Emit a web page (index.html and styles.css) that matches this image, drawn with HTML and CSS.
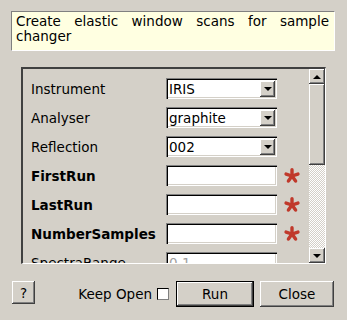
FILE: index.html
```html
<!DOCTYPE html>
<html lang="en">
<head>
    <meta charset="UTF-8">
    <title>Sample Changer Scans</title>
    <link rel="stylesheet" href="styles.css">
</head>
<body>
    <div class="desc">Create elastic window scans for sample changer</div>
    <div class="frame">
        <div class="rows">
            <span class="label">Instrument</span>
            <div class="combo"><span>IRIS</span><i class="drop"></i></div>
            <span></span>

            <span class="label">Analyser</span>
            <div class="combo"><span>graphite</span><i class="drop"></i></div>
            <span></span>

            <span class="label">Reflection</span>
            <div class="combo"><span>002</span><i class="drop"></i></div>
            <span></span>

            <span class="label bold">FirstRun</span>
            <div class="field"></div>
            <svg class="req" viewBox="0 0 16 16"><g stroke="#c0392b" stroke-width="3.4" stroke-linecap="round"><line x1="8" y1="8" x2="8" y2="1.8"/><line x1="8" y1="8" x2="13.9" y2="6.1"/><line x1="8" y1="8" x2="11.6" y2="13"/><line x1="8" y1="8" x2="4.4" y2="13"/><line x1="8" y1="8" x2="2.1" y2="6.1"/></g></svg>

            <span class="label bold">LastRun</span>
            <div class="field"></div>
            <svg class="req" viewBox="0 0 16 16"><g stroke="#c0392b" stroke-width="3.4" stroke-linecap="round"><line x1="8" y1="8" x2="8" y2="1.8"/><line x1="8" y1="8" x2="13.9" y2="6.1"/><line x1="8" y1="8" x2="11.6" y2="13"/><line x1="8" y1="8" x2="4.4" y2="13"/><line x1="8" y1="8" x2="2.1" y2="6.1"/></g></svg>

            <span class="label bold">NumberSamples</span>
            <div class="field"></div>
            <svg class="req" viewBox="0 0 16 16"><g stroke="#c0392b" stroke-width="3.4" stroke-linecap="round"><line x1="8" y1="8" x2="8" y2="1.8"/><line x1="8" y1="8" x2="13.9" y2="6.1"/><line x1="8" y1="8" x2="11.6" y2="13"/><line x1="8" y1="8" x2="4.4" y2="13"/><line x1="8" y1="8" x2="2.1" y2="6.1"/></g></svg>

            <span class="label">SpectraRange</span>
            <div class="field"><span class="hint">0.1</span></div>
            <span></span>
        </div>
        <div class="vscroll">
            <div class="sbtn"><i class="arrow-up"></i></div>
            <div class="thumb"></div>
            <div class="track"></div>
            <div class="sbtn"><i class="arrow-down"></i></div>
        </div>
    </div>
    <div class="footer">
        <div class="btn help">?</div>
        <div class="actions">
            <span class="keep">Keep Open</span>
            <div class="check"></div>
            <div class="btn default">Run</div>
            <div class="btn close">Close</div>
        </div>
    </div>
</body>
</html>
```

FILE: styles.css
```css
body {
    margin: 0;
    background: #d4d0c8;
    font-family: "DejaVu Sans", sans-serif;
    font-size: 13.5px;
    color: #000;
    width: 347px;
    height: 320px;
    overflow: hidden;
}
.desc {
    margin: 11px 12px 0 11px;
    height: 40px;
    box-sizing: border-box;
    padding: 2px 5px 0 4px;
    background: #ffffe1;
    border-top: 1px solid #808080;
    border-left: 1px solid #808080;
    border-right: 1px solid #ffffff;
    border-bottom: 1px solid #ffffff;
    line-height: 15px;
    text-align: justify;
}
.frame {
    display: flex;
    margin: 16px 0 0 21px;
    width: 305px;
    height: 197px;
    box-sizing: border-box;
    border-top: 2px solid #404040;
    border-left: 2px solid #404040;
    border-right: 1px solid #ffffff;
    border-bottom: 1px solid #ffffff;
    overflow: hidden;
}
.rows {
    flex: 1;
    min-width: 0;
    display: grid;
    grid-template-columns: 135px 111px 23px;
    grid-auto-rows: 21px;
    row-gap: 8px;
    align-items: center;
    align-content: start;
    padding: 9px 0 0 8px;
}
.label {
    white-space: nowrap;
}
.bold {
    font-weight: bold;
}
.combo, .field {
    display: flex;
    align-items: center;
    height: 21px;
    box-sizing: border-box;
    background: #ffffff;
    padding: 0 2px 0 3px;
    box-shadow: inset 1px 1px #808080, inset 2px 2px #000000, inset -1px -1px #ffffff, inset -2px -2px #d4d0c8;
}
.combo span {
    flex: 1;
}
.drop {
    display: flex;
    align-items: center;
    justify-content: center;
    width: 15px;
    height: 16px;
    background: #d4d0c8;
    box-shadow: inset -1px -1px #404040, inset 1px 1px #ffffff, inset -2px -2px #808080;
}
.drop::after {
    content: "";
    border-left: 4px solid transparent;
    border-right: 4px solid transparent;
    border-top: 4px solid #000;
    margin-top: 1px;
}
.hint {
    color: #a0a0a0;
}
.req {
    width: 16px;
    height: 16px;
    margin-left: 7px;
}
.vscroll {
    width: 16px;
    flex: none;
    display: flex;
    flex-direction: column;
}
.sbtn {
    height: 15px;
    display: flex;
    align-items: center;
    justify-content: center;
    background: #d4d0c8;
    box-shadow: inset -1px -1px #404040, inset 1px 1px #ffffff, inset -2px -2px #808080;
}
.arrow-up {
    border-left: 4px solid transparent;
    border-right: 4px solid transparent;
    border-bottom: 4px solid #000;
}
.arrow-down {
    border-left: 4px solid transparent;
    border-right: 4px solid transparent;
    border-top: 4px solid #000;
}
.thumb {
    height: 81px;
    background: #d4d0c8;
    box-shadow: inset -1px -1px #404040, inset 1px 1px #ffffff, inset -2px -2px #808080;
}
.track {
    flex: 1;
    background-color: #ffffff;
    background-image: conic-gradient(#d4d0c8 25%, transparent 0 50%, #d4d0c8 0 75%, transparent 0);
    background-size: 2px 2px;
}
.footer {
    display: flex;
    align-items: center;
    justify-content: space-between;
    margin: 17px 13px 0 12px;
}
.actions {
    display: flex;
    align-items: center;
}
.btn {
    display: flex;
    align-items: center;
    justify-content: center;
    height: 26px;
    box-sizing: border-box;
    background: #d4d0c8;
    box-shadow: inset -1px -1px #404040, inset 1px 1px #ffffff, inset -2px -2px #808080;
}
.help {
    width: 23px;
    height: 23px;
    margin-top: -3px;
}
.check {
    width: 12px;
    height: 12px;
    margin-left: 5px;
    box-sizing: border-box;
    background: #ffffff;
    border: 1px solid #000;
    border-right-color: #808080;
    border-bottom-color: #808080;
}
.default {
    width: 78px;
    margin-left: 7px;
    border: 1px solid #000;
}
.close {
    width: 74px;
    margin-left: 6px;
}
```
